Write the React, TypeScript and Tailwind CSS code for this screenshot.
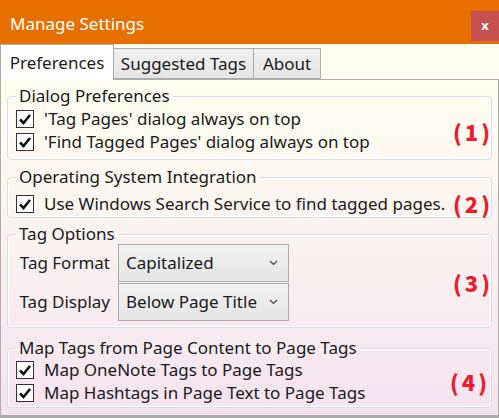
import { ReactNode } from "react";

const Check = ({ label }: { label: string }) => (
    <div className="flex items-center h-[23px] pl-[8px]">
        <div className="w-[18px] h-[18px] border border-[#333333] bg-white flex items-center justify-center shrink-0">
            <svg width="14" height="14" viewBox="0 0 14 14">
                <path d="M2 7.5 L5.5 11 L12 3" fill="none" stroke="#111111" strokeWidth="2.6" />
            </svg>
        </div>
        <span className="ml-[10px] whitespace-nowrap">{label}</span>
    </div>
);

const Marker = ({ n }: { n: string }) => (
    <span className="font-['Noto_Sans_CJK_SC',sans-serif] font-black text-[22px] text-[#EC1C2C] tracking-[3px] -mr-[3px]">
        ({n})
    </span>
);

const Group = ({ title, className, children }: { title: string; className: string; children: ReactNode }) => (
    <fieldset className={`border border-[#D5DFE5] rounded-[4px] shadow-[inset_0_0_0_1px_#ffffff] mx-[6px] px-0 ${className}`}>
        <legend className="ml-[8px] px-[3px] leading-[20px]">{title}</legend>
        {children}
    </fieldset>
);

const Combo = ({ value }: { value: string }) => (
    <div className="w-[171px] h-[38px] border border-[#ACACAC] bg-gradient-to-b from-[#F2F2F2] to-[#E5E5E5] flex items-center justify-between pl-[7px] pr-[10px]">
        <span>{value}</span>
        <svg width="9" height="6" viewBox="0 0 9 6">
            <path d="M1 1 L4.5 4.5 L8 1" fill="none" stroke="#444444" strokeWidth="1.2" />
        </svg>
    </div>
);

export default function App() {
    return (
        <div className="w-[499px] h-[418px] flex flex-col font-['Noto_Sans',sans-serif] text-[17px] text-[#1a1a1a] bg-[#FFFFF0]">
            <div className="h-[44px] bg-[#E66F00] flex items-start justify-between shrink-0">
                <span className="text-white text-[17px] pl-[10px] pt-[13px] leading-[22px]">Manage Settings</span>
                <div className="mt-[11px] w-[28px] h-[30px] bg-[#C75050] flex items-center justify-center text-white font-bold text-[13px] leading-none pb-[2px]">
                    x
                </div>
            </div>

            <div className="h-[35px] flex items-end shrink-0 relative z-10">
                <div className="h-[36px] w-[114px] bg-white border border-b-0 border-[#ACACAC] -mb-px flex items-center justify-center">
                    Preferences
                </div>
                <div className="h-[31px] w-[140px] bg-gradient-to-b from-[#F0F0F0] to-[#E5E5E5] border border-l-0 border-[#ACACAC] flex items-center justify-center">
                    Suggested Tags
                </div>
                <div className="h-[31px] w-[67px] bg-gradient-to-b from-[#F0F0F0] to-[#E5E5E5] border border-l-0 border-[#ACACAC] flex items-center justify-center">
                    About
                </div>
            </div>

            <div className="flex-1 border border-[#ACACAC] border-b-[3px] bg-gradient-to-b from-[#FFFFF0] to-[#F5E3F0] pt-[6px]">
                <Group title="Dialog Preferences" className="h-[74px]">
                    <div className="flex items-center">
                        <div className="flex-1 mt-[1px]">
                            <Check label="'Tag Pages' dialog always on top" />
                            <Check label="'Find Tagged Pages' dialog always on top" />
                        </div>
                        <div className="pr-[1px] mt-[3px]">
                            <Marker n="1" />
                        </div>
                    </div>
                </Group>

                <Group title="Operating System Integration" className="h-[51px] mt-[7px]">
                    <div className="flex items-center">
                        <div className="flex-1">
                            <Check label="Use Windows Search Service to find tagged pages." />
                        </div>
                        <div className="pr-[1px]">
                            <Marker n="2" />
                        </div>
                    </div>
                </Group>

                <Group title="Tag Options" className="h-[104px] mt-[6px]">
                    <div className="flex items-center">
                        <div className="flex-1 grid grid-cols-[102px_auto] gap-x-[8px] gap-y-px justify-start items-center">
                            <span className="text-right whitespace-nowrap">Tag Format</span>
                            <Combo value="Capitalized" />
                            <span className="text-right whitespace-nowrap">Tag Display</span>
                            <Combo value="Below Page Title" />
                        </div>
                        <div className="pr-[1px]">
                            <Marker n="3" />
                        </div>
                    </div>
                </Group>

                <Group title="Map Tags from Page Content to Page Tags" className="h-[70px] mt-[10px]">
                    <div className="flex items-center">
                        <div className="flex-1">
                            <Check label="Map OneNote Tags to Page Tags" />
                            <Check label="Map Hashtags in Page Text to Page Tags" />
                        </div>
                        <div className="pr-[4px]">
                            <Marker n="4" />
                        </div>
                    </div>
                </Group>
            </div>
        </div>
    );
}
